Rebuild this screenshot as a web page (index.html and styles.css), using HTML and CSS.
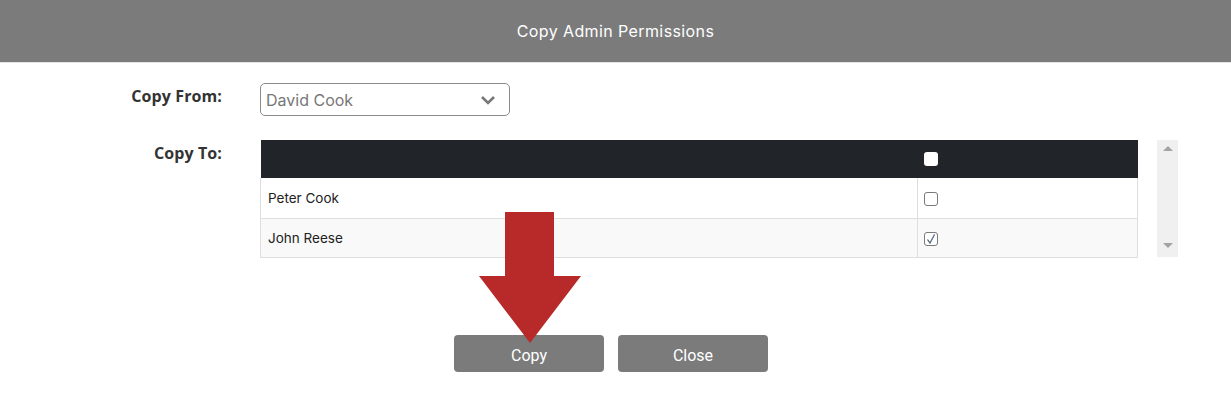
FILE: index.html
```html
<!DOCTYPE html>
<html>
<head>
<meta charset="utf-8">
<link rel="stylesheet" href="styles.css">
</head>
<body>
<div class="header">Copy Admin Permissions</div>
<div class="form">
  <div class="row row-from">
    <div class="label">Copy From:</div>
    <div class="select">
      <span>David Cook</span>
      <svg class="chev" width="16" height="10" viewBox="0 0 16 10"><path d="M2 2 L8 8 L14 2" fill="none" stroke="#777" stroke-width="2.6"/></svg>
    </div>
  </div>
  <div class="row row-to">
    <div class="label label-to">Copy To:</div>
    <div class="tablewrap">
      <table class="grid">
        <thead>
          <tr><th class="name"></th><th class="chk"><span class="hbox"></span></th></tr>
        </thead>
        <tbody>
          <tr><td class="name">Peter Cook</td><td class="chk"><span class="box"></span></td></tr>
          <tr class="alt"><td class="name">John Reese</td><td class="chk"><span class="box"><svg width="14" height="14" viewBox="0 0 14 14"><path d="M3.5 7.5 L6 11 L10.5 2.5" fill="none" stroke="#555" stroke-width="1.2"/><path d="M6 11 L10.5 2.5" fill="none" stroke="#6a8fc8" stroke-width="0.8"/></svg></span></td></tr>
        </tbody>
      </table>
      <div class="scroll">
        <span class="up"></span>
        <span class="down"></span>
      </div>
    </div>
  </div>
  <div class="buttons">
    <button class="btn">Copy</button>
    <button class="btn">Close</button>
  </div>
</div>
<svg class="arrow" width="102" height="132" viewBox="0 0 102 132"><polygon points="26,0 75,0 75,64 102,64 51,131 0,64 26,64" fill="#b82a2a"/></svg>
</body>
</html>
```
FILE: styles.css
```css
html, body { margin: 0; padding: 0; background: #fff; }
body { position: relative; width: 1231px; height: 411px; overflow: hidden; font-family: "Inter", "Roboto", sans-serif; }
.header {
  height: 62px;
  background: #7b7b7b;
  border-bottom: 1px solid #e4e4e4;
  color: #fff;
  font-family: "Inter", sans-serif;
  font-size: 16px;
  font-weight: 400;
  display: flex;
  align-items: center;
  justify-content: center;
  letter-spacing: 0.4px;
}
.form { padding-top: 20px; }
.row { display: flex; align-items: flex-start; gap: 38px; }
.label {
  width: 222px;
  text-align: right;
  font-family: "Open Sans", sans-serif;
  font-weight: 700;
  font-size: 16px;
  letter-spacing: 0.1px;
  color: #333;
}
.row-from .label { line-height: 26px; }
.select {
  box-sizing: border-box;
  width: 250px;
  height: 33px;
  border: 1px solid #8a8a8a;
  border-radius: 5px;
  display: flex;
  align-items: center;
  justify-content: space-between;
  padding: 0 13px 0 5px;
  color: #777;
  font-size: 16px;
}
.row-to { margin-top: 24px; }
.label-to { line-height: 26px; }
.tablewrap { display: flex; gap: 19px; }
.grid {
  border-collapse: collapse;
  width: 878px;
  font-size: 13.5px;
  color: #222;
}
.grid thead th { background: #212529; height: 38px; padding: 0; text-align: left; }
.grid td { height: 38px; padding: 0 0 0 7px; border: 1px solid #dedede; box-sizing: border-box; }
.grid tbody tr:first-child td { height: 40px; border-top: none; }
.grid tr.alt td { background: #f9f9f9; }
.grid th.chk { width: 213px; padding-left: 6px; box-sizing: content-box; }
.grid td.chk { width: 213px; padding-left: 6px; box-sizing: content-box; }
.hbox { display: block; width: 14px; height: 14px; background: #fff; border-radius: 3px; margin-top: 0; }
.box { display: block; width: 14px; height: 14px; box-sizing: border-box; border: 1px solid #7a7a7a; border-radius: 3px; background: #fff; position: relative; margin-top: 2px; }
.box svg { position: absolute; left: -1px; top: -1px; }
.scroll {
  width: 21px;
  height: 117px;
  background: #f0f0f0;
  display: flex;
  flex-direction: column;
  justify-content: space-between;
  align-items: center;
  padding: 6px 0;
  box-sizing: border-box;
}
.up { width: 0; height: 0; border-left: 5px solid transparent; border-right: 5px solid transparent; border-bottom: 5px solid #a3a3a3; }
.down { width: 0; height: 0; border-left: 5px solid transparent; border-right: 5px solid transparent; border-top: 5px solid #a3a3a3; margin-bottom: 3px; }
.buttons { display: flex; gap: 14px; padding-left: 454px; margin-top: 77px; }
.btn {
  width: 150px;
  height: 37px;
  background: #7b7b7b;
  border: none;
  border-radius: 4px;
  color: #fff;
  font-family: "Roboto", sans-serif;
  font-size: 16px;
  font-weight: 400;
  padding: 0;
  padding-top: 3px;
}
.arrow { position: absolute; left: 479px; top: 212px; }
```
